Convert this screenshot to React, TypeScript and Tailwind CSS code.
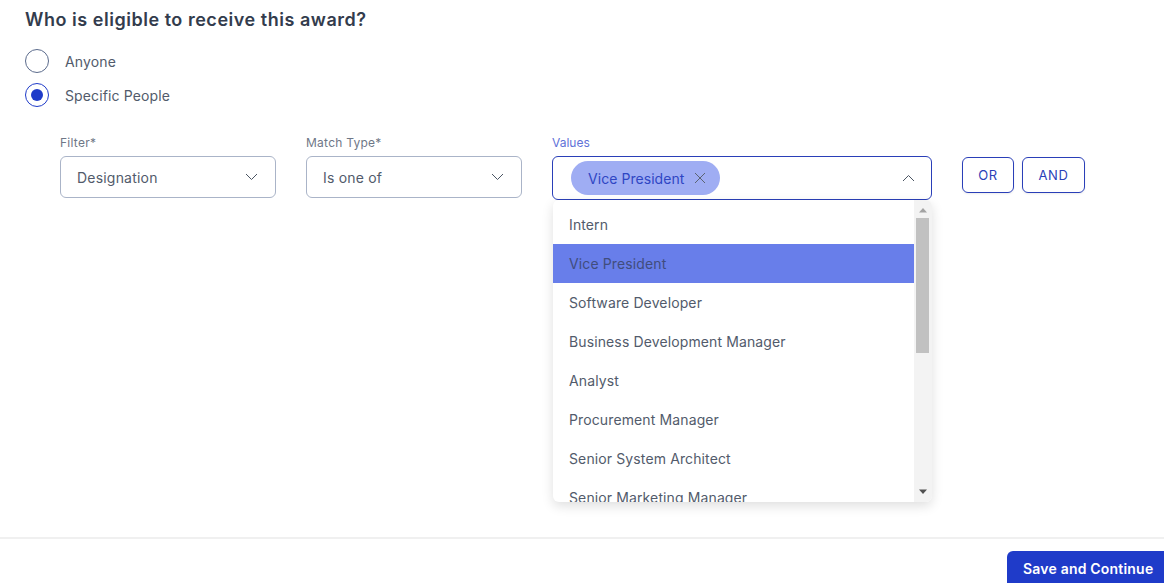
import React from "react";

const font = { fontFamily: "Inter, 'Liberation Sans', sans-serif" };

function Chevron({ up = false, className = "" }: { up?: boolean; className?: string }) {
  return (
    <svg width="13" height="8" viewBox="0 0 13 8" fill="none" stroke="#4b5563" strokeWidth="1" className={className}>
      <path d={up ? "M1 7 L6.5 1.5 L12 7" : "M1 1 L6.5 6.5 L12 1"} />
    </svg>
  );
}

function Select({ label, value }: { label: string; value: string }) {
  return (
    <div className="flex w-[216px] flex-col">
      <div className="h-[20px] text-[12px] leading-[14px] tracking-[0.25px] text-[#6f7787]">{label}</div>
      <div className="flex h-[42px] items-center justify-between rounded-[6px] border border-[#aab4c8] pl-[16px] pr-[17px]">
        <span className="text-[14px] tracking-[0.2px] text-[#525b6b]">{value}</span>
        <Chevron />
      </div>
    </div>
  );
}

const options = [
  "Intern",
  "Vice President",
  "Software Developer",
  "Business Development Manager",
  "Analyst",
  "Procurement Manager",
  "Senior System Architect",
  "Senior Marketing Manager",
];

export default function App() {
  return (
    <div style={font} className="flex h-[583px] w-[1164px] flex-col overflow-hidden bg-white">
      <div className="flex-1 pl-[25px] pt-[9px]">
        <h1 className="text-[18px] font-semibold leading-[22px] tracking-[0.53px] text-[#333c4d]">
          Who is eligible to receive this award?
        </h1>
        <div className="mt-[18px] flex flex-col gap-[10px]">
          <label className="flex h-[24px] items-center gap-[16px]">
            <span className="h-[24px] w-[24px] rounded-full border border-[#5b6b8c]" />
            <span className="text-[14px] tracking-[0.15px] text-[#525b6b]">Anyone</span>
          </label>
          <label className="flex h-[24px] items-center gap-[16px]">
            <span className="flex h-[24px] w-[24px] items-center justify-center rounded-full border border-[#1f3bc9]">
              <span className="h-[12px] w-[12px] rounded-full bg-[#1f3bc9]" />
            </span>
            <span className="text-[14px] tracking-[0.12px] text-[#525b6b]">Specific People</span>
          </label>
        </div>
        <div className="ml-[35px] mt-[29px] flex items-start gap-[30px]">
          <Select label="Filter*" value="Designation" />
          <Select label="Match Type*" value="Is one of" />
          <div className="relative flex w-[380px] flex-col">
            <div className="h-[20px] text-[12px] leading-[14px] text-[#5f72d8]">Values</div>
            <div className="flex h-[44px] items-center justify-between rounded-[6px] border border-[#2a3fb8] pl-[18px] pr-[16px]">
              <span className="flex h-[34px] items-center gap-[10px] rounded-full bg-[#9fadf3] pl-[17px] pr-[14px]">
                <span className="text-[14px] tracking-[0.05px] text-[#2f46c4]">Vice President</span>
                <svg width="12" height="12" viewBox="0 0 12 12" fill="none" stroke="#5b6472" strokeWidth="1">
                  <path d="M1 1 L11 11 M11 1 L1 11" />
                </svg>
              </span>
              <Chevron up />
            </div>
            <div className="absolute left-[1px] top-[64px] flex h-[302px] w-[379px] overflow-hidden rounded-[6px] bg-white shadow-[0_4px_12px_rgba(0,0,0,0.13)]">
              <div className="h-full w-[361px] overflow-hidden pt-[5px]">
                {options.map((o) => (
                  <div
                    key={o}
                    className={`flex h-[39px] items-center px-[16px] text-[14px] tracking-[0.12px] ${
                      o === "Vice President" ? "bg-[#687eea] text-[#414d7d]" : "text-[#525b6b]"
                    }`}
                  >
                    {o}
                  </div>
                ))}
              </div>
              <div className="flex h-full w-[18px] flex-col justify-between bg-[#f3f3f3]">
                <div className="flex w-full flex-col items-center">
                  <svg width="8" height="18" viewBox="0 0 8 18" fill="#a3a3a3"><path d="M4 8 L8 12.5 H0 Z" /></svg>
                  <div className="ml-[-1px] h-[135px] w-[13px] bg-[#c1c1c1]" />
                </div>
                <div className="flex w-full justify-center">
                  <svg width="8" height="18" viewBox="0 0 8 18" fill="#505050"><path d="M0 5.5 H8 L4 10 Z" /></svg>
                </div>
              </div>
            </div>
          </div>
          <div className="flex gap-[8px] pt-[21px]">
            <button className="h-[36px] w-[52px] rounded-[6px] border border-[#2a3fb8] pt-[1px] text-[13px] tracking-[0.6px] text-[#2a3fb8] shadow-[0_1px_2px_rgba(0,0,0,0.08)]">OR</button>
            <button className="h-[36px] w-[63px] rounded-[6px] border border-[#2a3fb8] pt-[1px] text-[13px] tracking-[0.6px] text-[#2a3fb8] shadow-[0_1px_2px_rgba(0,0,0,0.08)]">AND</button>
          </div>
        </div>
      </div>
      <div className="flex h-[46px] items-end justify-end border-t-2 border-[#f0f0f0]">
        <button className="h-[32px] w-[157px] rounded-tl-[6px] bg-[#1f3bc9] pl-[16px] pt-[2px] text-left text-[14px] font-semibold tracking-[0.2px] text-white">
          Save and Continue
        </button>
      </div>
    </div>
  );
}
